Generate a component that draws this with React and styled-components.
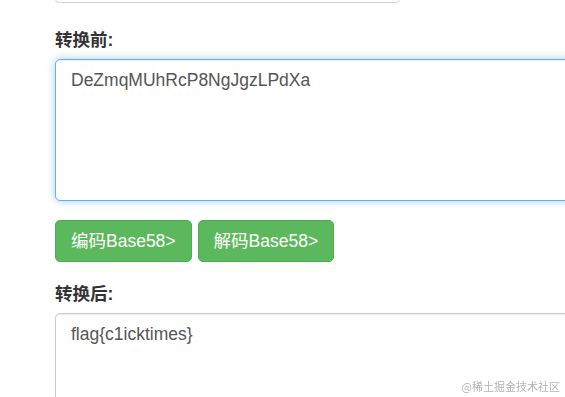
import styled, { createGlobalStyle } from "styled-components";

const GlobalStyle = createGlobalStyle`
  html, body {
    margin: 0;
    padding: 0;
    background: #fff;
    overflow: hidden;
  }
  body {
    font-family: "Liberation Sans", "Noto Sans CJK SC", sans-serif;
    color: #333;
  }
`;

const Page = styled.div`
  width: 600px;
  padding-left: 55px;
  height: 397px;
  overflow: hidden;
`;

const FormGroup = styled.div`
  margin-bottom: ${(props) => props.$gap || 19}px;
`;

const TopInput = styled.div`
  box-sizing: border-box;
  width: 345px;
  height: 43px;
  margin-top: -40px;
  border: 1px solid #d6d6d6;
  border-radius: 4px;
  background: #fff;
`;

const Label = styled.label`
  display: block;
  font-size: 17.5px;
  line-height: 25px;
  font-weight: bold;
  color: #333;
  margin-bottom: 6px;
`;

const TextArea = styled.textarea`
  display: block;
  box-sizing: border-box;
  width: 100%;
  height: 142px;
  padding: 7.5px 15px;
  font-family: "Liberation Sans", "Noto Sans CJK SC", sans-serif;
  font-size: 17.5px;
  line-height: 25px;
  color: #555;
  background: #fff;
  border: 1px solid ${(props) => (props.$focused ? "#66afe9" : "#ccc")};
  border-radius: 5px;
  resize: none;
  outline: none;
  box-shadow: ${(props) =>
    props.$focused
      ? "inset 0 1px 1px rgba(0,0,0,.075), 0 0 10px rgba(102,175,233,.6)"
      : "inset 0 1px 1px rgba(0,0,0,.075)"};
`;

const ButtonRow = styled.div`
  display: flex;
  gap: 6px;
  margin-bottom: 20px;
`;

const Button = styled.button`
  box-sizing: border-box;
  height: 42px;
  padding: 7.5px 15px;
  font-family: "Liberation Sans", "Noto Sans CJK SC", sans-serif;
  font-size: 17.5px;
  line-height: 25px;
  color: #fff;
  background: #5cb85c;
  border: 1px solid #4cae4c;
  border-radius: 5px;
  cursor: pointer;
`;

const Watermark = styled.div`
  position: fixed;
  right: 5px;
  bottom: 3px;
  font-family: "Noto Sans CJK SC", sans-serif;
  font-size: 11px;
  line-height: 15px;
  color: #b4b4b4;
`;

export default function App() {
  return (
    <>
      <GlobalStyle />
      <Page>
        <FormGroup $gap={25}>
          <TopInput />
        </FormGroup>
        <FormGroup>
          <Label>转换前:</Label>
          <TextArea $focused readOnly value="DeZmqMUhRcP8NgJgzLPdXa" />
        </FormGroup>
        <ButtonRow>
          <Button>编码Base58&gt;</Button>
          <Button>解码Base58&gt;</Button>
        </ButtonRow>
        <FormGroup>
          <Label>转换后:</Label>
          <TextArea readOnly value="flag{c1icktimes}" />
        </FormGroup>
      </Page>
      <Watermark>@稀土掘金技术社区</Watermark>
    </>
  );
}
